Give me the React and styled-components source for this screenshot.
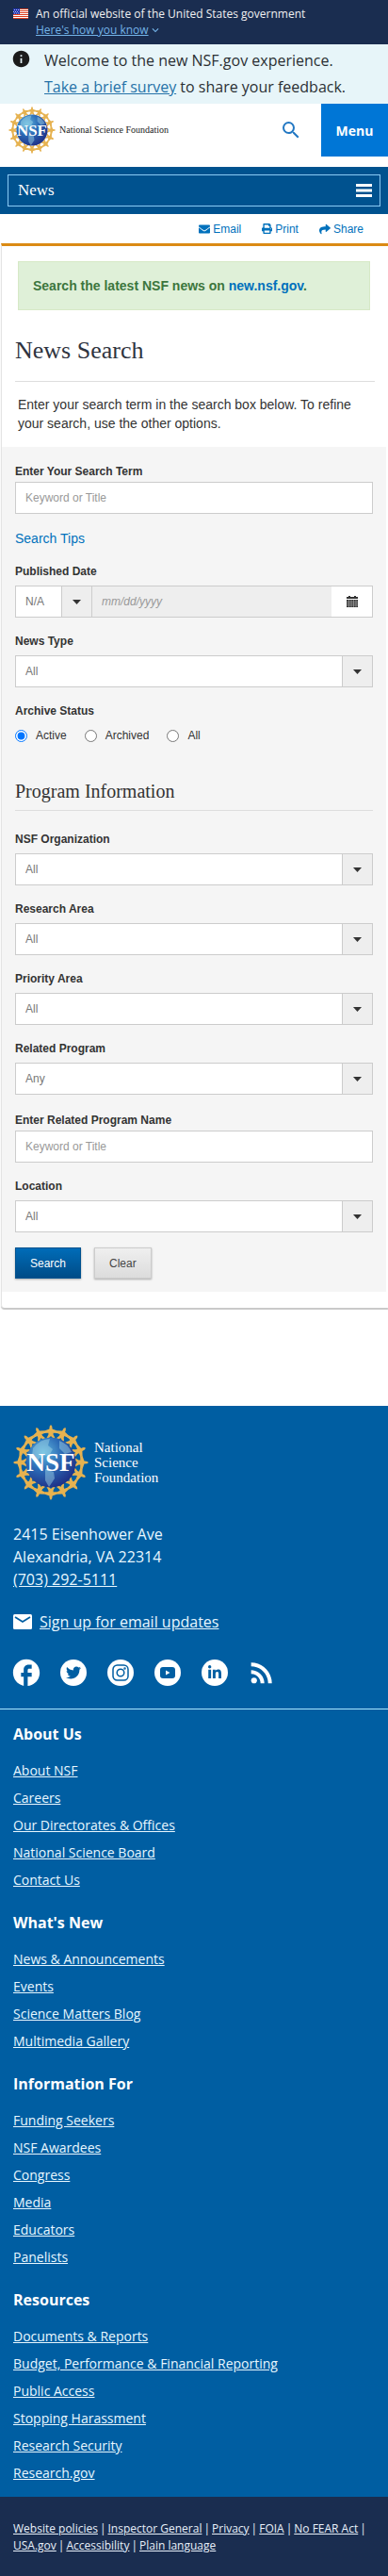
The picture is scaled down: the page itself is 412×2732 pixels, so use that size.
import React, { useState } from "react";
import styled, { createGlobalStyle, css } from "styled-components";
import { FaEnvelope, FaPrint, FaShare, FaTwitter, FaLinkedinIn } from "react-icons/fa";
import { MdExpandMore, MdFacebook, MdInfo, MdRssFeed, MdSearch } from "react-icons/md";

const GlobalStyle = createGlobalStyle`
  *, *::before, *::after { box-sizing: border-box; }
  body { margin: 0; background: #fff; color: #333; font-family: "Liberation Sans", Arial, sans-serif; font-size: 14px; line-height: 20px; }
  h1, h2, h3, p, ul, address { margin: 0; padding: 0; font-style: normal; }
  button, input, select { font-family: inherit; border-radius: 0; margin: 0; }
  svg { display: block; flex: none; }
`;

const openSans = css`font-family: "Open Sans", "Noto Sans", sans-serif;`;
const serif = css`font-family: "Liberation Serif", "Times New Roman", serif;`;

/* Government banner */
const GovBanner = styled.div`
  ${openSans}
  display: flex;
  gap: 8px;
  padding: 6px 14px 7px;
  background: #1a2d50;
  color: #f0f0f0;
  font-size: 12px;
  line-height: 17px;
`;
const FlagWrap = styled.div`padding-top: 3px;`;
const GovToggle = styled.button`
  display: flex;
  align-items: center;
  padding: 0;
  border: 0;
  background: none;
  color: #73b3e7;
  font-size: 12px;
  line-height: 17px;
  span { text-decoration: underline; }
`;

/* Survey notice */
const Notice = styled.div`
  ${openSans}
  display: flex;
  gap: 14px;
  padding: 3px 12px 4px;
  background: #e7f5f9;
  color: #2b3034;
  font-size: 16px;
  line-height: 28px;
  a { color: #2672a8; }
  > svg { margin-top: 2px; color: #1b1b1b; }
`;

/* Site header */
const Header = styled.header`
  display: flex;
  align-items: center;
  height: 56px;
  margin-bottom: 11px;
  padding-left: 9px;
  background: #fff;
`;
const Brand = styled.a`
  ${serif}
  display: flex;
  align-items: center;
  gap: ${(p) => (p.$large ? 6 : 4)}px;
  color: ${(p) => (p.$large ? "#fff" : "#222")};
  font-size: ${(p) => (p.$large ? 15 : 10)}px;
  line-height: 16px;
  text-decoration: none;
`;
const HeaderSearch = styled.button`
  margin-left: auto;
  padding: 0 20px 0 0;
  border: 0;
  background: none;
  color: #2378c3;
`;
const MenuButton = styled.button`
  && { ${openSans} }
  align-self: stretch;
  width: 71px;
  border: 0;
  background: #0076d6;
  color: #fff;
  font-size: 14px;
  font-weight: 700;
`;

/* Section navigation */
const SectionNav = styled.nav`
  padding: 8px;
  background: #00528f;
`;
const SectionToggle = styled.button`
  && { ${serif} }
  display: flex;
  align-items: center;
  justify-content: space-between;
  width: 100%;
  height: 34px;
  padding: 0 8px 0 10px;
  border: 1px solid #8ccbf5;
  background: none;
  color: #fff;
  font-size: 17px;
`;

const Toolbar = styled.div`
  display: flex;
  justify-content: flex-end;
  gap: 22px;
  height: 31px;
  padding: 0 26px 0 0;
  align-items: center;
`;
const ToolLink = styled.a`
  display: flex;
  align-items: center;
  gap: 3px;
  color: #0071bc;
  font-size: 12px;
  text-decoration: none;
`;

/* Main page panel */
const Panel = styled.main`
  margin-left: 1px;
  padding-bottom: 17px;
  border-top: 3px solid #db8a14;
  border-left: 1px solid #e4e4e4;
  border-bottom-left-radius: 4px;
  box-shadow: 0 2px 1px #c8c8c8;
`;
const Alert = styled.div`
  margin: 16px 19px 0 17px;
  padding: 15px;
  border: 1px solid #d6e9c6;
  background: #dff0d8;
  color: #3c763d;
  font-weight: 700;
  a { color: #0071bc; text-decoration: none; }
`;
const PageTitle = styled.h1`
  ${serif}
  margin: 25px 14px 0;
  padding-bottom: 14px;
  border-bottom: 1px solid #ddd;
  color: #2f3440;
  font-size: 26px;
  font-weight: 400;
  line-height: 36px;
`;
const Intro = styled.p`margin: 14px 17px 15px;`;

/* Search form */
const Form = styled.form`
  display: flex;
  flex-direction: column;
  gap: 16px;
  margin-right: 2px;
  padding: 15px 14px 14px;
  background: #f5f5f5;
`;
const Field = styled.div`
  display: flex;
  flex-direction: column;
  gap: ${(p) => (p.$tight ? 2 : 6)}px;
  margin-top: ${(p) => (p.$tight ? 2 : 0)}px;
`;
const Label = styled.label`
  color: #333;
  font-size: 12px;
  font-weight: 700;
  line-height: 18px;
`;
const TextBox = styled.input`
  width: 100%;
  height: 34px;
  padding: 0 10px;
  border: 1px solid #ccc;
  background: #fff;
  font-size: 12px;
  &::placeholder { color: #999; }
`;
const TipsLink = styled.a`
  align-self: flex-start;
  color: #0071bc;
  text-decoration: none;
`;
const SelectBox = styled.span`
  display: grid;
  width: ${(p) => p.$width || "100%"};
  > * { grid-area: 1 / 1; }
`;
const Select = styled.select`
  appearance: none;
  width: 100%;
  height: 34px;
  padding: 0 40px 0 10px;
  border: 1px solid #ccc;
  background: #fff;
  color: #777;
  font-size: 12px;
`;
const Caret = styled.span`
  display: flex;
  align-items: center;
  justify-content: center;
  justify-self: end;
  width: 33px;
  border: 1px solid #ccc;
  background: #eee;
  pointer-events: none;
`;
const DateRow = styled.div`display: flex;`;
const DateInput = styled.input`
  flex: 1;
  min-width: 0;
  height: 34px;
  padding: 0 10px;
  border: solid #ccc;
  border-width: 1px 0;
  background: #eee;
  font-size: 12px;
  font-style: italic;
  &::placeholder { color: #999; }
`;
const DateButton = styled.button`
  display: flex;
  align-items: center;
  justify-content: center;
  width: 44px;
  height: 34px;
  border: 1px solid #ccc;
  border-left: 0;
  background: #fff;
  color: #333;
`;
const RadioGroup = styled.fieldset`
  margin: 0;
  padding: 0;
  border: 0;
  font-size: 12px;
`;
const Legend = styled.legend`
  padding: 0;
  margin-bottom: 7px;
  font-weight: 700;
  line-height: 18px;
`;
const RadioRow = styled.div`
  display: flex;
  gap: 19px;
  label { display: flex; align-items: center; gap: 9px; line-height: 20px; }
  input { width: 13px; height: 13px; }
`;
const SectionTitle = styled.h2`
  ${serif}
  margin: 21px 0 5px;
  padding-bottom: 8px;
  border-bottom: 1px solid #ddd;
  font-size: 20px;
  font-weight: 400;
  line-height: 24px;
`;
const Actions = styled.div`
  display: flex;
  gap: 14px;
`;
const ActionButton = styled.button`
  height: 33px;
  padding: 0 15px;
  border: 1px solid ${(p) => (p.$primary ? "#00528f" : "#ccc")};
  background: ${(p) => (p.$primary ? "linear-gradient(#006cb8, #004c87)" : "linear-gradient(#efefef, #dcdcdc)")};
  box-shadow: 0 1px 2px #aaa;
  color: ${(p) => (p.$primary ? "#fff" : "#444")};
  font-size: 12px;
`;

/* Footer */
const Footer = styled.footer`
  ${openSans}
  margin-top: 104px;
  background: #005ea2;
  color: #e8f7ff;
  a { color: inherit; }
  a[href="#home"] { color: #fff; }
`;
const Contact = styled.div`
  padding: 20px 14px 24px;
  border-bottom: 1px solid #a9e6ff;
  font-size: 16px;
  line-height: 24px;
`;
const Address = styled.address`margin-top: 24px;`;
const SignUp = styled.div`
  display: flex;
  align-items: center;
  gap: 8px;
  margin-top: 21px;
`;
const Socials = styled.ul`
  display: flex;
  gap: 22px;
  margin-top: 28px;
  list-style: none;
  a { display: block; }
`;
const Badge = styled.span`
  display: flex;
  align-items: center;
  justify-content: center;
  width: 28px;
  height: 28px;
  border-radius: 50%;
  background: ${(p) => (p.$plain ? "none" : "#fff")};
  color: ${(p) => (p.$plain ? "#fff" : "#005ea2")};
`;
const LinkGroups = styled.div`
  display: flex;
  flex-direction: column;
  gap: 19px;
  padding: 14px 14px 11px;
`;
const GroupTitle = styled.h3`
  color: #fff;
  font-size: 16px;
  line-height: 24px;
`;
const GroupLinks = styled.ul`
  margin-top: 12px;
  list-style: none;
  font-size: 14px;
  line-height: 29px;
`;
const Legal = styled.ul`
  display: flex;
  flex-wrap: wrap;
  padding: 25px 14px 23px;
  background: #1a2d50;
  color: #e8f0fa;
  font-size: 12px;
  line-height: 18px;
  list-style: none;
  span { margin: 0 2px; }
`;

function Seal({ size }) {
  const figures = Array.from({ length: 16 }, (_, i) => i * 22.5);
  return (
    <svg width={size} height={size} viewBox="0 0 80 80" aria-hidden="true">
      <defs>
        <radialGradient id={`globe${size}`} cx="0.35" cy="0.3" r="0.75">
          <stop offset="0" stopColor="#5fb6dd" />
          <stop offset="0.5" stopColor="#2a68b4" />
          <stop offset="1" stopColor="#1f2f86" />
        </radialGradient>
        <linearGradient id={`gold${size}`} gradientUnits="userSpaceOnUse" x1="0" y1="0" x2="0" y2="80">
          <stop offset="0" stopColor="#e6c878" />
          <stop offset="1" stopColor="#e09a1c" />
        </linearGradient>
      </defs>
      <circle cx="40" cy="40" r="32.500" fill="none" stroke={`url(#gold${size})`} strokeWidth="1.5" />
      <g fill="#e6b250">
        {figures.map((a) => (
          <path
            key={a}
            transform={`rotate(${a} 40 40)`}
            d="M40 0 Q41.800 1 41.600 4.500 L47 6.500 L46 8.500 L42.600 8.500 L42.600 10.500 L44.500 14 L42.500 14.500 L40 12 L37.500 14.500 L35.500 14 L37.400 10.500 L37.400 8.500 L34 8.500 L33 6.500 L38.400 4.500 Q38.200 1 40 0Z"
          />
        ))}
      </g>
      <circle cx="40" cy="40" r="26.500" fill={`url(#globe${size})`} />
      <path d="M21 25q8-10 18-10l-2 7 5 4-4 7-7-1-5 6-6-5zM49 17q9 3 13 12l-7 2-6-6zM34 47l9 3 1 7-6 9-4-7z" fill="#a6dcea" opacity="0.45" />
      <text x="40" y="49" textAnchor="middle" fontFamily="Liberation Serif, serif" fontWeight="700" fontSize="27" fill="#fff">NSF</text>
    </svg>
  );
}

function Flag() {
  return (
    <svg width="16" height="11" viewBox="0 0 16 11" aria-hidden="true">
      <path fill="#fff" d="M0 0h16v11H0z" />
      <path stroke="#db3e1f" d="M0 .5h16M0 2.500h16M0 4.500h16M0 6.500h16M0 8.500h16M0 10.500h16" />
      <path fill="#1e33b1" d="M0 0h7v6H0z" />
      <path stroke="#fff" strokeDasharray="1 1" d="M1 1.500h6M0 3.500h6M1 5h6" opacity=".7" />
    </svg>
  );
}

function Burger() {
  return (
    <svg width="17" height="14" viewBox="0 0 17 14" fill="#fff" aria-hidden="true">
      <path d="M0 0h17v3H0zM0 5.500h17v3H0zM0 11h17v3H0z" />
    </svg>
  );
}

function Calendar() {
  return (
    <svg width="12" height="12" viewBox="0 0 12 12" aria-hidden="true">
      <path fill="#333" d="M0 1h2V0h2v1h4V0h2v1h2v2H0zM0 4h12v8H0z" />
      <path stroke="#fff" strokeWidth="0.5" d="M0 6h12M0 8h12M0 10h12M2.500 4v8M5 4v8M7.500 4v8M10 4v8" opacity="0.7" />
    </svg>
  );
}

function Mail() {
  return (
    <svg width="20" height="16" viewBox="0 0 20 16" aria-hidden="true">
      <rect width="20" height="16" rx="1.5" fill="#fff" />
      <path d="M2 3l8 5 8-5" fill="none" stroke="#005ea2" strokeWidth="1.800" />
    </svg>
  );
}

function Instagram() {
  return (
    <svg width="18" height="18" viewBox="0 0 18 18" fill="none" stroke="currentColor" strokeWidth="1.500" aria-hidden="true">
      <rect x="1" y="1" width="16" height="16" rx="4.500" />
      <circle cx="9" cy="9" r="3.800" />
      <circle cx="13.500" cy="4.500" r="0.500" />
    </svg>
  );
}

function YouTube() {
  return (
    <svg width="16" height="12" viewBox="0 0 16 12" aria-hidden="true">
      <rect width="16" height="12" rx="3" fill="currentColor" />
      <path d="M6 3.500v5L10.500 6z" fill="#fff" />
    </svg>
  );
}

function Arrow() {
  return (
    <Caret>
      <svg width="9" height="5" viewBox="0 0 9 5" aria-hidden="true"><path fill="#333" d="M0 0h9L4.500 5z" /></svg>
    </Caret>
  );
}

function SelectField({ id, label, value }) {
  return (
    <Field>
      <Label htmlFor={id}>{label}</Label>
      <SelectBox>
        <Select id={id} defaultValue={value}><option>{value}</option></Select>
        <Arrow />
      </SelectBox>
    </Field>
  );
}

const groups = [
  ["About Us", ["About NSF", "Careers", "Our Directorates & Offices", "National Science Board", "Contact Us"]],
  ["What's New", ["News & Announcements", "Events", "Science Matters Blog", "Multimedia Gallery"]],
  ["Information For", ["Funding Seekers", "NSF Awardees", "Congress", "Media", "Educators", "Panelists"]],
  ["Resources", ["Documents & Reports", "Budget, Performance & Financial Reporting", "Public Access", "Stopping Harassment", "Research Security", "Research.gov"]],
];
const legal = ["Website policies", "Inspector General", "Privacy", "FOIA", "No FEAR Act", "USA.gov", "Accessibility", "Plain language"];
const socials = [
  ["Facebook", <Badge $plain><MdFacebook size={34} /></Badge>],
  ["Twitter", <Badge><FaTwitter size={16} /></Badge>],
  ["Instagram", <Badge><Instagram /></Badge>],
  ["YouTube", <Badge><YouTube /></Badge>],
  ["LinkedIn", <Badge><FaLinkedinIn size={16} /></Badge>],
  ["RSS", <Badge $plain><MdRssFeed size={34} /></Badge>],
];

export default function App() {
  const [status, setStatus] = useState("Active");
  return (
    <>
      <GlobalStyle />
      <GovBanner>
        <FlagWrap><Flag /></FlagWrap>
        <div>
          <p>An official website of the United States government</p>
          <GovToggle type="button"><span>Here's how you know</span><MdExpandMore size={14} /></GovToggle>
        </div>
      </GovBanner>
      <Notice>
        <MdInfo size={21} />
        <p>Welcome to the new NSF.gov experience.<br /><a href="#survey">Take a brief survey</a> to share your feedback.</p>
      </Notice>
      <Header>
        <Brand href="#home"><Seal size={50} />National Science Foundation</Brand>
        <HeaderSearch type="button" aria-label="Search"><MdSearch size={24} /></HeaderSearch>
        <MenuButton type="button">Menu</MenuButton>
      </Header>
      <SectionNav>
        <SectionToggle type="button">News<Burger /></SectionToggle>
      </SectionNav>
      <Toolbar>
        <ToolLink href="#email"><FaEnvelope size={12} />Email</ToolLink>
        <ToolLink href="#print"><FaPrint size={11} />Print</ToolLink>
        <ToolLink href="#share"><FaShare size={12} />Share</ToolLink>
      </Toolbar>
      <Panel>
        <Alert>Search the latest NSF news on <a href="#new">new.nsf.gov</a>.</Alert>
        <PageTitle>News Search</PageTitle>
        <Intro>Enter your search term in the search box below. To refine your search, use the other options.</Intro>
        <Form onSubmit={(e) => e.preventDefault()}>
          <Field $tight>
            <Label htmlFor="term">Enter Your Search Term</Label>
            <TextBox id="term" placeholder="Keyword or Title" />
          </Field>
          <TipsLink href="#tips">Search Tips</TipsLink>
          <Field>
            <Label htmlFor="date">Published Date</Label>
            <DateRow>
              <SelectBox $width="82px">
                <Select aria-label="Date range"><option>N/A</option></Select>
                <Arrow />
              </SelectBox>
              <DateInput id="date" placeholder="mm/dd/yyyy" />
              <DateButton type="button" aria-label="Choose date"><Calendar /></DateButton>
            </DateRow>
          </Field>
          <SelectField id="type" label="News Type" value="All" />
          <RadioGroup>
            <Legend>Archive Status</Legend>
            <RadioRow>
              {["Active", "Archived", "All"].map((s) => (
                <label key={s}><input type="radio" name="status" checked={status === s} onChange={() => setStatus(s)} />{s}</label>
              ))}
            </RadioRow>
          </RadioGroup>
          <SectionTitle>Program Information</SectionTitle>
          <SelectField id="org" label="NSF Organization" value="All" />
          <SelectField id="area" label="Research Area" value="All" />
          <SelectField id="priority" label="Priority Area" value="All" />
          <SelectField id="related" label="Related Program" value="Any" />
          <Field $tight>
            <Label htmlFor="program">Enter Related Program Name</Label>
            <TextBox id="program" placeholder="Keyword or Title" />
          </Field>
          <SelectField id="location" label="Location" value="All" />
          <Actions>
            <ActionButton type="submit" $primary>Search</ActionButton>
            <ActionButton type="reset">Clear</ActionButton>
          </Actions>
        </Form>
      </Panel>
      <Footer>
        <Contact>
          <Brand href="#home" $large><Seal size={80} /><span>National<br />Science<br />Foundation</span></Brand>
          <Address>2415 Eisenhower Ave<br />Alexandria, VA 22314<br /><a href="tel:7032925111">(703) 292-5111</a></Address>
          <SignUp><Mail /><a href="#updates">Sign up for email updates</a></SignUp>
          <Socials>
            {socials.map(([name, icon]) => <li key={name}><a href={`#${name}`} aria-label={name}>{icon}</a></li>)}
          </Socials>
        </Contact>
        <LinkGroups>
          {groups.map(([title, links]) => (
            <section key={title}>
              <GroupTitle>{title}</GroupTitle>
              <GroupLinks>{links.map((l) => <li key={l}><a href="#link">{l}</a></li>)}</GroupLinks>
            </section>
          ))}
        </LinkGroups>
        <Legal>
          {legal.map((l, i) => <li key={l}><a href="#legal">{l}</a>{i < legal.length - 1 && <span>|</span>}</li>)}
        </Legal>
      </Footer>
    </>
  );
}
